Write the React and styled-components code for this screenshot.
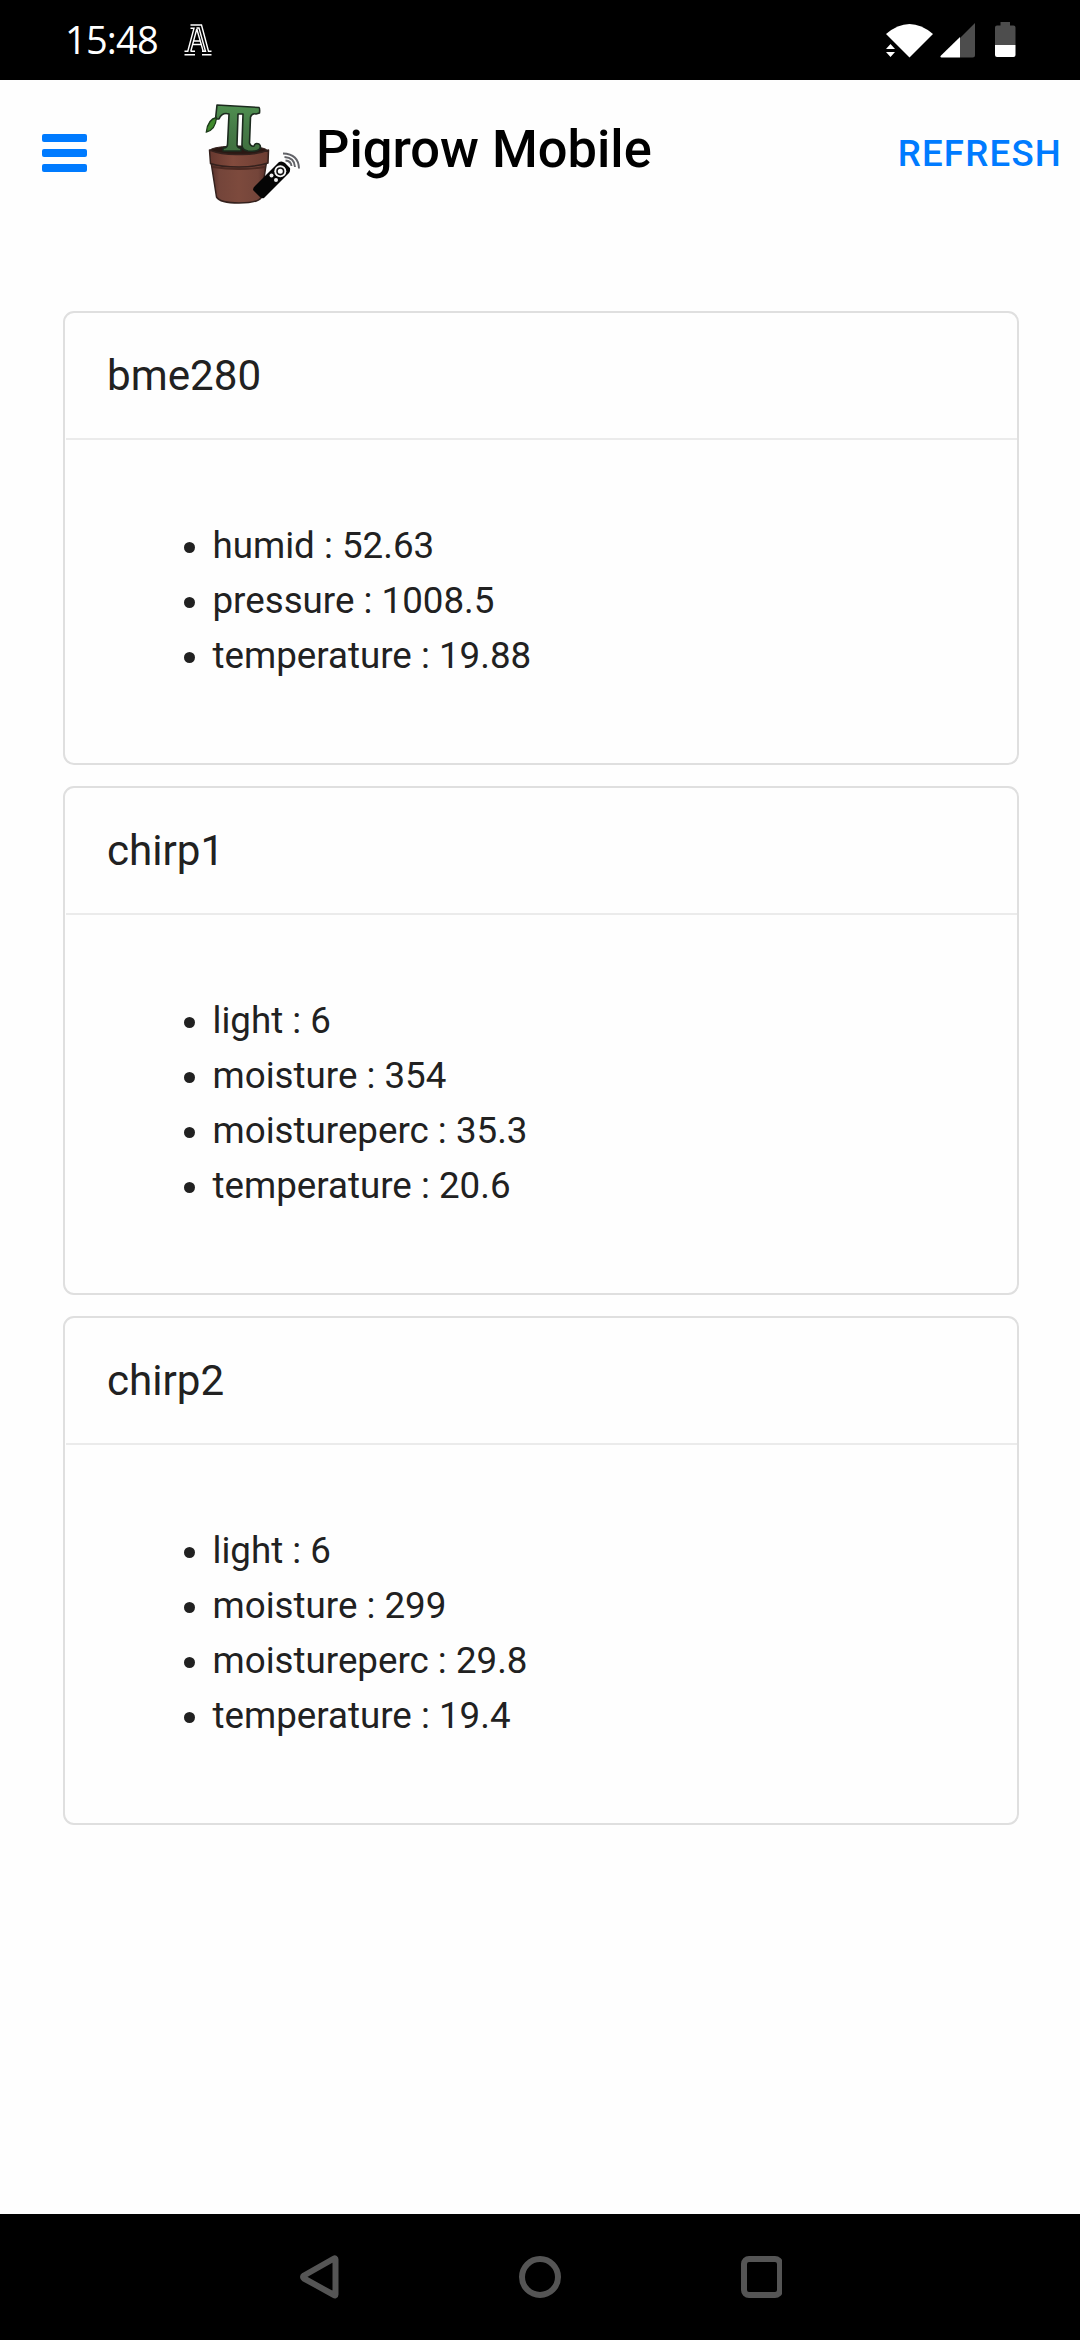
import React from "react";
import styled, { createGlobalStyle } from "styled-components";

const Global = createGlobalStyle`
  *, *::before, *::after { box-sizing: border-box; }
  body {
    margin: 0;
    background: #fefefe;
    color: #212121;
    font-family: Roboto, "Liberation Sans", sans-serif;
  }
`;

const Screen = styled.div`
  width: 1080px;
  height: 2340px;
  display: flex;
  flex-direction: column;
  overflow: hidden;
`;

const StatusBar = styled.header`
  height: 80px;
  flex: none;
  padding: 0 64px 0 65px;
  background: #000;
  color: #fff;
  display: flex;
  align-items: center;
`;

const Clock = styled.time`
  width: 119px;
  padding-bottom: 1px;
  font: 400 38px/79px "Open Sans", "Noto Sans", sans-serif;
  letter-spacing: -0.8px;
`;

const StatusIcons = styled.div`
  margin-left: auto;
  display: flex;
`;

const Toolbar = styled.nav`
  height: 154px;
  flex: none;
  padding: 0 18px 0 42px;
  display: flex;
  align-items: flex-start;
`;

const MenuButton = styled.button`
  width: 45px;
  height: 38px;
  margin: 54px 115px 0 0;
  padding: 0;
  border: 0;
  background: none;
  display: flex;
  flex-direction: column;
  justify-content: space-between;
`;

const MenuBar = styled.span`
  width: 45px;
  height: 8px;
  border-radius: 2px;
  background: #007bff;
`;

const LogoSlot = styled.div`
  height: 106px;
  margin-top: 20px;
`;

const AppTitle = styled.h1`
  margin: 38px 0 0 11px;
  font-size: 52.4px;
  line-height: 62px;
  font-weight: 500;
  color: #000;
  white-space: nowrap;
`;

const RefreshButton = styled.button`
  margin: 52px 0 0 auto;
  padding: 0;
  border: 0;
  background: none;
  color: #007bff;
  font: 500 36.67px/43px Roboto, "Liberation Sans", sans-serif;
  letter-spacing: 1.2px;
`;

const CardList = styled.main`
  flex: 1;
  padding: 77px 61px 0 63px;
  display: flex;
  flex-direction: column;
  gap: 21px;
`;

const Card = styled.section`
  border: 2px solid #dfdfdf;
  border-radius: 11px;
  background: #fefefe;
`;

const CardTitle = styled.h2`
  margin: 0 0 0 1px;
  height: 127px;
  padding: 0 41px;
  border-bottom: 2px solid #ebebeb;
  font-size: 42.17px;
  line-height: 125px;
  font-weight: 400;
`;

const Readings = styled.ul`
  margin: 0;
  padding: 78px 44px 80px 147.5px;
  font-size: 36.72px;
  line-height: 55px;
`;

const NavBar = styled.footer`
  height: 126px;
  flex: none;
  background: #000;
  display: flex;
  justify-content: center;
`;

const sensors = [
  { name: "bme280", values: [["humid", "52.63"], ["pressure", "1008.5"], ["temperature", "19.88"]] },
  { name: "chirp1", values: [["light", "6"], ["moisture", "354"], ["moistureperc", "35.3"], ["temperature", "20.6"]] },
  { name: "chirp2", values: [["light", "6"], ["moisture", "299"], ["moistureperc", "29.8"], ["temperature", "19.4"]] },
];

const LetterIcon = () => (
  <svg width="28" height="34" viewBox="184 23 28 34" fill="none" stroke="#fff" strokeWidth="1.4">
    <path d="M190.500 25H201.500L208.500 51.300H211.500M190.500 28.200H194L187.800 51.300H184.500M184.500 54.700H195M202 54.700H211.500M190.500 51.300H195M196.800 29L190.800 51.300M196.800 29L203.200 51.300M202 51.300H205.500L199 28H196.500M193.800 41H200.200M192.800 44.500H201.300" />
  </svg>
);

const SystemIcons = () => (
  <svg width="132" height="38" viewBox="884 21 132 38">
    <path d="M886 34Q909.500 14 933 34L909.500 57.500Z" fill="#fff" />
    <path d="M890.500 44L895 49H886ZM886 52H895L890.500 57Z" fill="#fff" />
    <path d="M975 23V55Q975 57.500 972.500 57.500H960V38Z" fill="#4d4d4d" />
    <path d="M960 37V57.500H941.500Q939.500 57 941 55.500Z" fill="#fff" />
    <path d="M1000.500 22H1010V25.500H1013.500Q1015.500 25.500 1015.500 27.500V45H995V27.500Q995 25.500 997 25.500H1000.500Z" fill="#4d4d4d" />
    <path d="M995 45H1015.500V55Q1015.500 57 1013.500 57H997Q995 57 995 55Z" fill="#fff" />
  </svg>
);

const Logo = () => (
  <svg width="103" height="106" viewBox="202 100 103 106">
    <defs>
      <linearGradient id="clay" x1="0" x2="1">
        <stop offset="0" stopColor="#57302a" />
        <stop offset=".15" stopColor="#74453a" />
        <stop offset=".5" stopColor="#7d4a3d" />
        <stop offset=".85" stopColor="#74453a" />
        <stop offset="1" stopColor="#57302a" />
      </linearGradient>
      <linearGradient id="rim" x1="0" x2="1">
        <stop offset="0" stopColor="#66382f" />
        <stop offset=".4" stopColor="#834b3d" />
        <stop offset="1" stopColor="#6c3d32" />
      </linearGradient>
      <linearGradient id="stem" x1="0" x2="0" y1="0" y2="1">
        <stop offset="0" stopColor="#4f8f50" />
        <stop offset=".5" stopColor="#467c48" />
        <stop offset="1" stopColor="#40703f" />
      </linearGradient>
    </defs>
    <path d="M211 162L216.500 197Q220 203 239 203Q257 203 261 198L266.500 162Z" fill="url(#clay)" stroke="#34211d" strokeWidth="1.500" strokeLinejoin="round" />
    <ellipse cx="238.500" cy="150.500" rx="28.500" ry="4.500" fill="#2a1813" stroke="#34211d" strokeWidth="1" />
    <path d="M209.500 150Q222 155 239 154.500Q256 155 268.500 150L268 163Q256 167 239 167Q220 167 210.500 163.500Z" fill="url(#rim)" stroke="#34211d" strokeWidth="1.500" strokeLinejoin="round" />
    <path d="M213 167Q239 171 265 167" stroke="#4d2a22" strokeWidth="1.800" fill="none" />
    <path d="M217 105L259 107.500Q260 108 259.500 113L256 114Q252 113 250.500 117L249.500 143Q251 147 254 146Q255 142.500 259 144Q261.500 146 259.500 149Q257 152 248 151Q241.500 150 242 144L243 114H238L237 145Q237.500 148 241 148V151H223V148Q227 148 227.500 145L229 114Q222 112 219 119L215.500 119Z" fill="url(#stem)" stroke="#1c2a1e" strokeWidth="1.600" strokeLinejoin="round" />
    <path d="M216.500 117.500Q208 119 206.300 132Q215.500 130 216.500 117.500Z" fill="#3f8a2c" stroke="#1c3a1a" strokeWidth="1.300" />
    <path d="M253 190Q253 187.500 255 186L279 162Q282 160.500 285 163L290 168Q290.500 171 289 173L264 198Q262 199 260 197Z" fill="#050505" />
    <circle cx="280.300" cy="171.300" r="6" fill="#f5f5f5" />
    <circle cx="280.300" cy="171.300" r="3.300" fill="#fff" stroke="#111" strokeWidth="1.600" />
    <circle cx="271.500" cy="175.500" r="2" fill="#eee" />
    <circle cx="276" cy="180" r="2" fill="#eee" />
    <g fill="none" stroke="#626368" strokeWidth="1.900">
      <path d="M285.500 160.500Q291 161 291.500 166" />
      <path d="M284.500 157Q294.500 157.500 295 167" />
      <path d="M283 153.500Q298.500 154 299 168.500" />
    </g>
  </svg>
);

export default function App() {
  return (
    <Screen>
      <Global />
      <StatusBar>
        <Clock>15:48</Clock>
        <LetterIcon />
        <StatusIcons><SystemIcons /></StatusIcons>
      </StatusBar>
      <Toolbar>
        <MenuButton aria-label="Menu"><MenuBar /><MenuBar /><MenuBar /></MenuButton>
        <LogoSlot><Logo /></LogoSlot>
        <AppTitle>Pigrow Mobile</AppTitle>
        <RefreshButton>REFRESH</RefreshButton>
      </Toolbar>
      <CardList>
        {sensors.map(({ name, values }) => (
          <Card key={name}>
            <CardTitle>{name}</CardTitle>
            <Readings>
              {values.map(([key, value]) => <li key={key}>{key} : {value}</li>)}
            </Readings>
          </Card>
        ))}
      </CardList>
      <NavBar>
        <svg width="484" height="126" viewBox="298 2214 484 126" fill="none" stroke="#555" strokeWidth="6" strokeLinejoin="round">
          <path d="M335.500 2259.500V2294.500Q335.500 2296 334 2295L304 2278.500Q302 2277 304 2275.500L334 2258.500Q335.500 2258 335.500 2259.500Z" />
          <circle cx="540" cy="2277" r="18" />
          <rect x="744" y="2259" width="36" height="36" rx="5" />
        </svg>
      </NavBar>
    </Screen>
  );
}
